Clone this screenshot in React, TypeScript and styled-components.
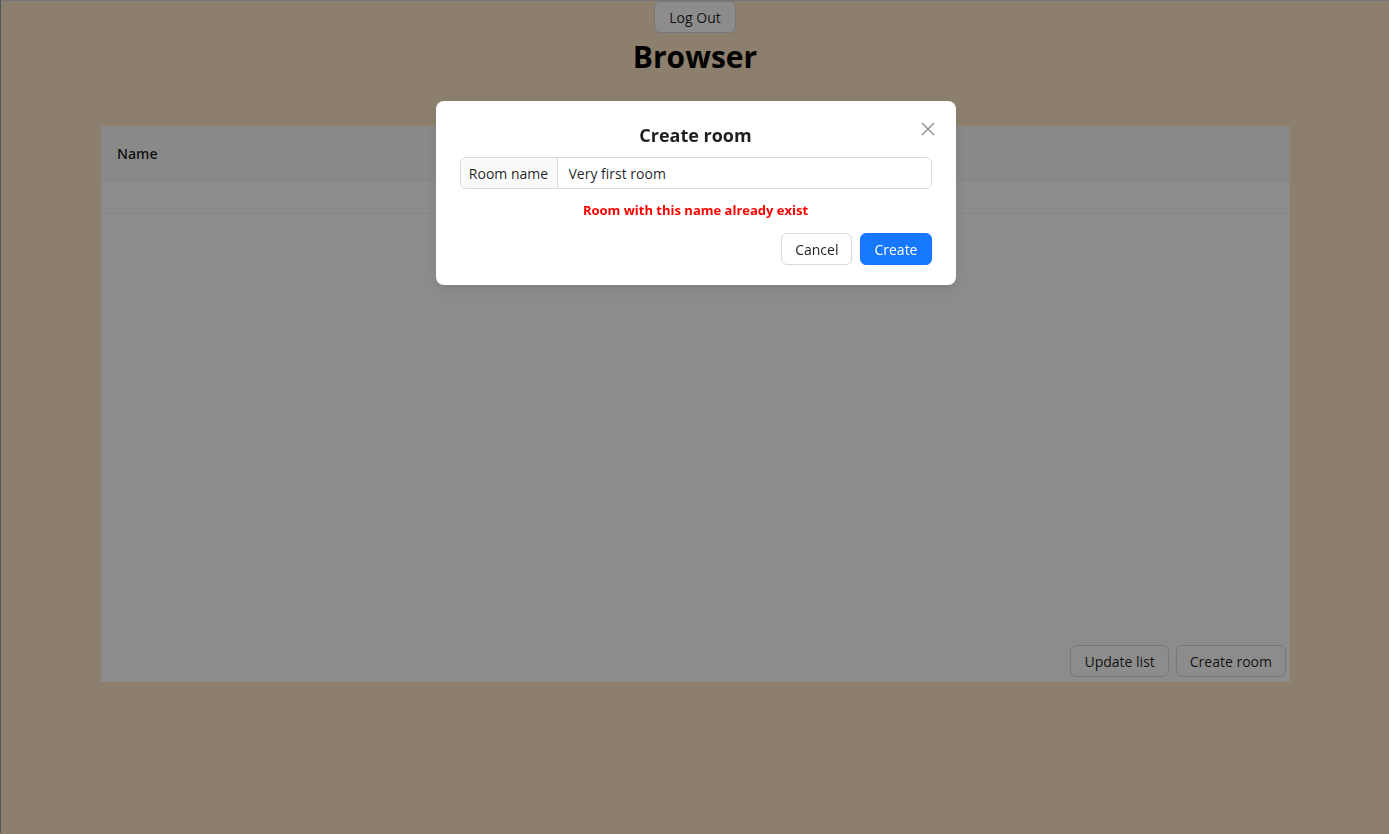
import React from "react";
import styled, { createGlobalStyle } from "styled-components";

const Global = createGlobalStyle`
  html, body { margin: 0; padding: 0; }
  body {
    font-family: "Open Sans", "Noto Sans", Arial, sans-serif;
    background: #ffe8c9;
    border-top: 1px solid #d8d8d8;
    border-left: 1px solid #909fb0;
    min-height: 833px;
    box-sizing: border-box;
  }
  * { box-sizing: border-box; }
`;

const Page = styled.div`
  display: flex;
  flex-direction: column;
  align-items: center;
`;

const GhostButton = styled.button`
  font-family: inherit;
  font-size: 14px;
  height: 32px;
  padding: 0 14px;
  border: 1px solid #d9d9d9;
  border-radius: 6px;
  background: #ffffff;
  color: rgba(0, 0, 0, 0.88);
  white-space: nowrap;
  cursor: pointer;
`;

const Title = styled.h1`
  font-size: 30px;
  font-weight: 700;
  margin: 4px 0 0;
  line-height: 40px;
  color: #000;
`;

const Table = styled.div`
  margin-top: 49px;
  width: 1189px;
  height: 556px;
  margin-left: 1px;
  background: #fff;
  display: flex;
  flex-direction: column;
`;

const HeadRow = styled.div`
  height: 55px;
  display: flex;
  align-items: center;
  padding: 0 16px;
  font-size: 14px;
  font-weight: 600;
  color: rgba(0, 0, 0, 0.88);
  background: #fafafa;
  border-bottom: 1px solid #f0f0f0;
`;

const EmptyRow = styled.div`
  height: 33px;
  border-bottom: 1px solid #f0f0f0;
`;

const TableBody = styled.div`
  flex: 1;
`;

const Footer = styled.div`
  display: flex;
  justify-content: flex-end;
  gap: 7px;
  padding: 0 4px 5px 0;
`;

const FooterButton = styled(GhostButton)`
  padding: 0 13px;
`;

const Mask = styled.div`
  position: fixed;
  inset: 0;
  background: rgba(0, 0, 0, 0.45);
`;

const ModalWrap = styled.div`
  position: fixed;
  inset: 0;
  display: flex;
  justify-content: center;
  align-items: flex-start;
  padding: 101px 0 0 2px;
`;

const Modal = styled.div`
  position: relative;
  width: 520px;
  background: #fff;
  border-radius: 8px;
  padding: 20px 24px 20px;
  box-shadow: 0 6px 16px rgba(0, 0, 0, 0.08), 0 3px 6px -4px rgba(0, 0, 0, 0.12);
  display: flex;
  flex-direction: column;
`;

const ModalTitle = styled.div`
  text-align: center;
  font-size: 18px;
  font-weight: 700;
  line-height: 28px;
  color: rgba(0, 0, 0, 0.88);
  margin-bottom: 8px;
`;

const CloseButton = styled.button`
  position: absolute;
  top: 17px;
  right: 17px;
  width: 22px;
  height: 22px;
  border: none;
  background: transparent;
  padding: 0;
  display: flex;
  align-items: center;
  justify-content: center;
  cursor: pointer;
`;

const InputGroup = styled.div`
  display: flex;
  height: 32px;
  border: 1px solid #d9d9d9;
  border-radius: 6px;
  overflow: hidden;
`;

const Addon = styled.div`
  display: flex;
  align-items: center;
  justify-content: center;
  flex: 0 0 97px;
  padding: 0 6px;
  background: #fafafa;
  border-right: 1px solid #d9d9d9;
  font-size: 14px;
  color: rgba(0, 0, 0, 0.88);
  white-space: nowrap;
`;

const Input = styled.input`
  flex: 1;
  min-width: 0;
  border: none;
  outline: none;
  font-family: inherit;
  font-size: 14px;
  padding: 0 11px;
  color: rgba(0, 0, 0, 0.88);
`;

const ErrorText = styled.div`
  text-align: center;
  color: #ff0000;
  font-weight: 700;
  font-size: 13px;
  line-height: 20px;
  margin-top: 11px;
`;

const Actions = styled.div`
  display: flex;
  justify-content: flex-end;
  gap: 8px;
  margin-top: 13px;
`;

const ModalButton = styled(GhostButton)`
  padding: 0 13px;
`;

const PrimaryButton = styled(ModalButton)`
  background: #1677ff;
  border-color: #1677ff;
  color: #fff;
`;

export default function App() {
  return (
    <>
      <Global />
      <Page>
        <GhostButton>Log Out</GhostButton>
        <Title>Browser</Title>
        <Table>
          <HeadRow>Name</HeadRow>
          <EmptyRow />
          <TableBody />
          <Footer>
            <FooterButton>Update list</FooterButton>
            <FooterButton>Create room</FooterButton>
          </Footer>
        </Table>
      </Page>
      <Mask />
      <ModalWrap>
        <Modal>
          <CloseButton aria-label="Close">
            <svg width="16" height="16" viewBox="0 0 16 16">
              <path d="M2 2 L14 14 M14 2 L2 14" stroke="rgba(0,0,0,0.45)" strokeWidth="1.4" fill="none" />
            </svg>
          </CloseButton>
          <ModalTitle>Create room</ModalTitle>
          <InputGroup>
            <Addon>Room name</Addon>
            <Input defaultValue="Very first room" />
          </InputGroup>
          <ErrorText>Room with this name already exist</ErrorText>
          <Actions>
            <ModalButton>Cancel</ModalButton>
            <PrimaryButton>Create</PrimaryButton>
          </Actions>
        </Modal>
      </ModalWrap>
    </>
  );
}
